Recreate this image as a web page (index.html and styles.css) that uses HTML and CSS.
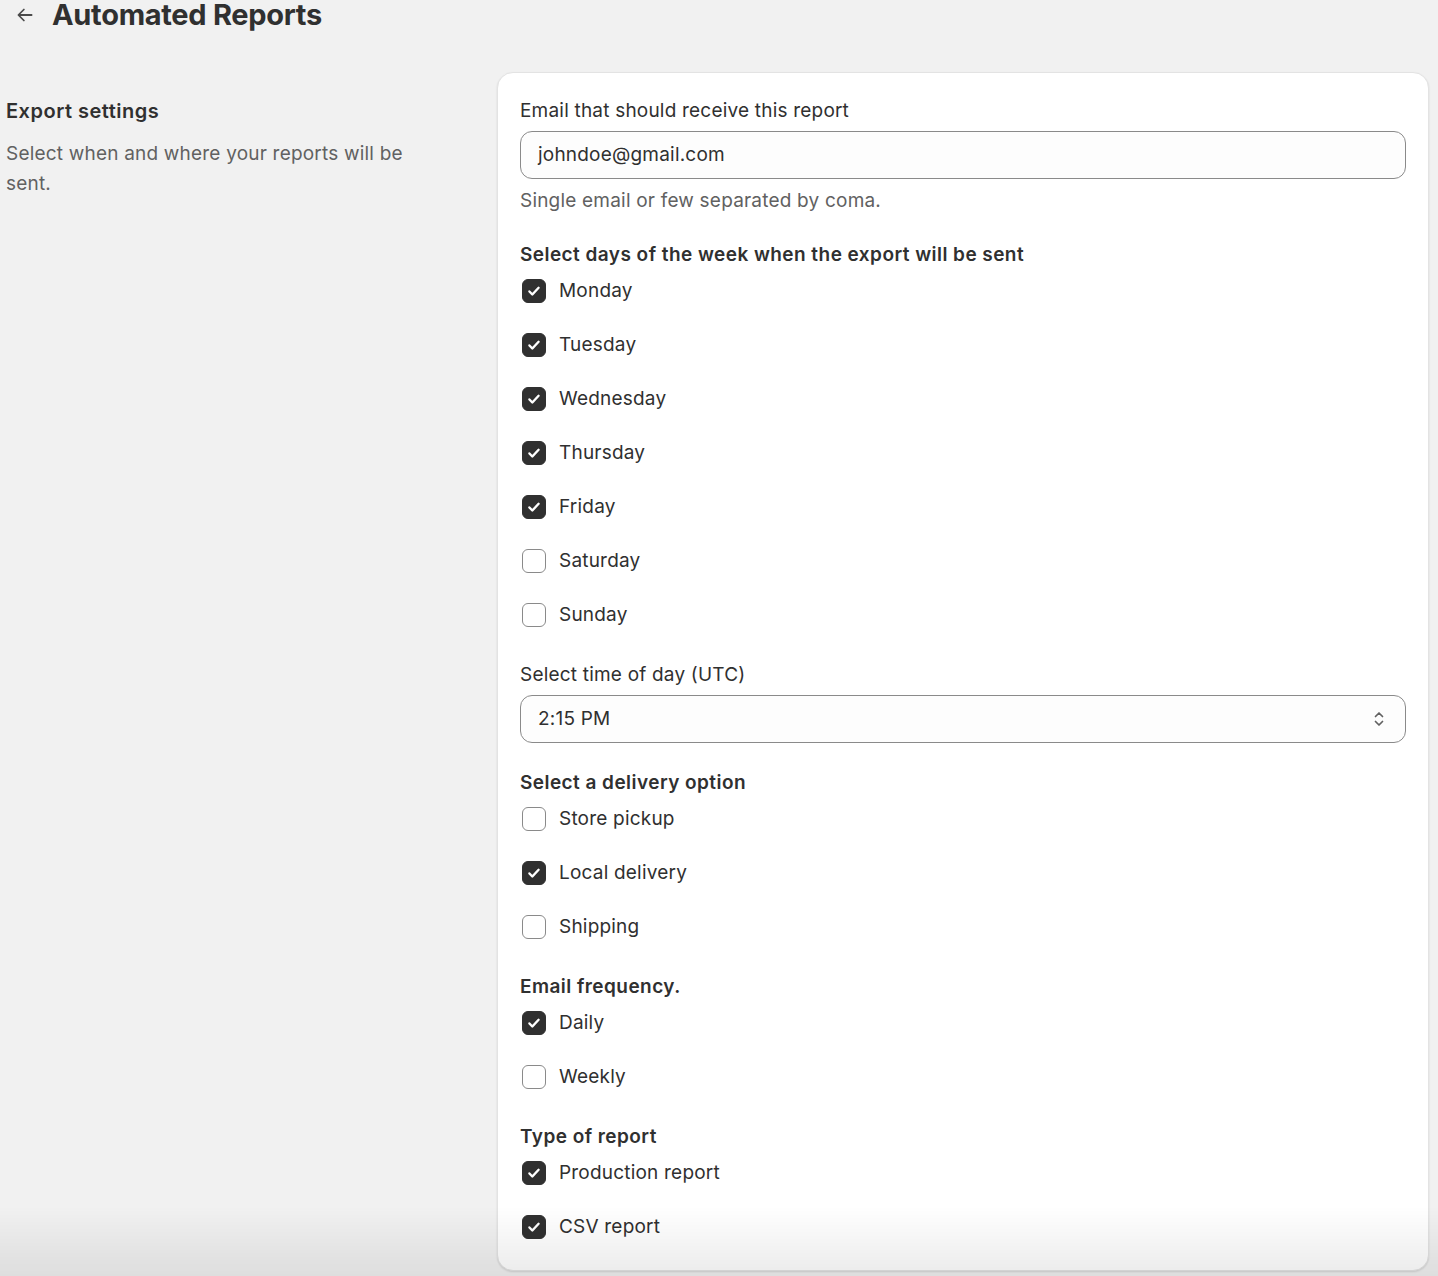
FILE: index.html
```html
<!DOCTYPE html>
<html lang="en">
<head>
    <meta charset="UTF-8">
    <meta name="viewport" content="width=device-width, initial-scale=1.0">
    <title>Automated Reports</title>
    <link rel="stylesheet" href="styles.css">
</head>
<body>
    <div class="page-header">
        <button class="back-btn" title="Back">
            <svg width="22" height="22" viewBox="0 0 20 20"><path d="M16 10H4.5M9 5l-5 5 5 5" fill="none" stroke="#4a4a4a" stroke-width="1.6" stroke-linecap="round" stroke-linejoin="round"/></svg>
        </button>
        <h1>Automated Reports</h1>
    </div>

    <div class="layout">
        <div class="annotation">
            <h2>Export settings</h2>
            <p>Select when and where your reports will be sent.</p>
        </div>

        <div class="card">
            <div class="field">
                <label class="field-label">Email that should receive this report</label>
                <div class="text-input">johndoe@gmail.com</div>
                <div class="help-text">Single email or few separated by coma.</div>
            </div>

            <div class="field">
                <div class="group-title">Select days of the week when the export will be sent</div>
                <div class="choice-list">
                    <label class="choice"><span class="box checked"></span>Monday</label>
                    <label class="choice"><span class="box checked"></span>Tuesday</label>
                    <label class="choice"><span class="box checked"></span>Wednesday</label>
                    <label class="choice"><span class="box checked"></span>Thursday</label>
                    <label class="choice"><span class="box checked"></span>Friday</label>
                    <label class="choice"><span class="box"></span>Saturday</label>
                    <label class="choice"><span class="box"></span>Sunday</label>
                </div>
            </div>

            <div class="field">
                <label class="field-label">Select time of day (UTC)</label>
                <div class="select-input">
                    <span>2:15 PM</span>
                    <svg width="16" height="20" viewBox="0 0 16 20"><path d="M4.5 7.5L8 4l3.5 3.5M4.5 12.5L8 16l3.5-3.5" fill="none" stroke="#616161" stroke-width="1.7" stroke-linecap="round" stroke-linejoin="round"/></svg>
                </div>
            </div>

            <div class="field">
                <div class="group-title">Select a delivery option</div>
                <div class="choice-list">
                    <label class="choice"><span class="box"></span>Store pickup</label>
                    <label class="choice"><span class="box checked"></span>Local delivery</label>
                    <label class="choice"><span class="box"></span>Shipping</label>
                </div>
            </div>

            <div class="field">
                <div class="group-title">Email frequency.</div>
                <div class="choice-list">
                    <label class="choice"><span class="box checked"></span>Daily</label>
                    <label class="choice"><span class="box"></span>Weekly</label>
                </div>
            </div>

            <div class="field">
                <div class="group-title">Type of report</div>
                <div class="choice-list">
                    <label class="choice"><span class="box checked"></span>Production report</label>
                    <label class="choice"><span class="box checked"></span>CSV report</label>
                </div>
            </div>
        </div>
    </div>

    <div class="bottom-fade"></div>
</body>
</html>
```

FILE: styles.css
```css
body { font-family: Inter, "Noto Sans", sans-serif; margin: 0; background-color: #f1f1f1; color: #303030; font-size: 19px; line-height: 26px; letter-spacing: 0.2px; }

.page-header { display: flex; align-items: center; height: 30px; margin-top: 0; padding-left: 14px; }
.page-header h1 { margin: 0 0 0 16px; font-size: 29px; font-weight: 700; letter-spacing: -0.3px; color: #303030; line-height: 30px; }
.back-btn { background: none; border: none; padding: 0; display: flex; cursor: pointer; }

.layout { display: grid; grid-template-columns: 420px 932px; column-gap: 71px; padding: 42px 0 6px 6px; align-items: start; }

.annotation { padding-top: 26px; }
.annotation h2 { margin: 0; font-size: 20px; font-weight: 600; line-height: 26px; color: #303030; letter-spacing: 0.5px; }
.annotation p { margin: 15px 0 0; color: #616161; line-height: 30px; }

.card { background-color: #fff; border-radius: 16px; border: 1px solid #e3e3e3; box-shadow: 0 1px 2px rgba(0, 0, 0, 0.12); padding: 25px 22px 24px; display: flex; flex-direction: column; gap: 28px; }

.field { display: flex; flex-direction: column; }
.field-label { display: block; margin-bottom: 7px; }
.help-text { color: #616161; margin-top: 9px; }
.group-title { font-weight: 600; letter-spacing: 0.45px; }

.text-input, .select-input { height: 46px; border: 1px solid #8a8a8a; border-radius: 12px; background-color: #fdfdfd; padding: 0 17px; display: flex; align-items: center; }
.select-input { justify-content: space-between; padding-right: 18px; margin-bottom: -1px; }

.choice-list { display: flex; flex-direction: column; gap: 28px; margin-top: 10px; margin-bottom: 6px; }
.choice { display: flex; align-items: center; gap: 13px; cursor: pointer; }
.box { width: 22px; height: 22px; margin-left: 2px; border: 1px solid #8a8a8a; border-radius: 6px; background-color: #fff; flex-shrink: 0; }
.box.checked {
    background-color: #303030;
    border-color: #303030;
    background-image: url("data:image/svg+xml,%3Csvg xmlns='http://www.w3.org/2000/svg' viewBox='0 0 24 24'%3E%3Cpath d='M7 12.5l3.2 3.3 6.8-7.3' fill='none' stroke='white' stroke-width='2.6' stroke-linecap='round' stroke-linejoin='round'/%3E%3C/svg%3E");
    background-size: 100% 100%;
}

.bottom-fade { position: fixed; left: 0; right: 0; bottom: 0; height: 70px; background: linear-gradient(to bottom, rgba(0, 0, 0, 0), rgba(0, 0, 0, 0.08)); pointer-events: none; }
```
